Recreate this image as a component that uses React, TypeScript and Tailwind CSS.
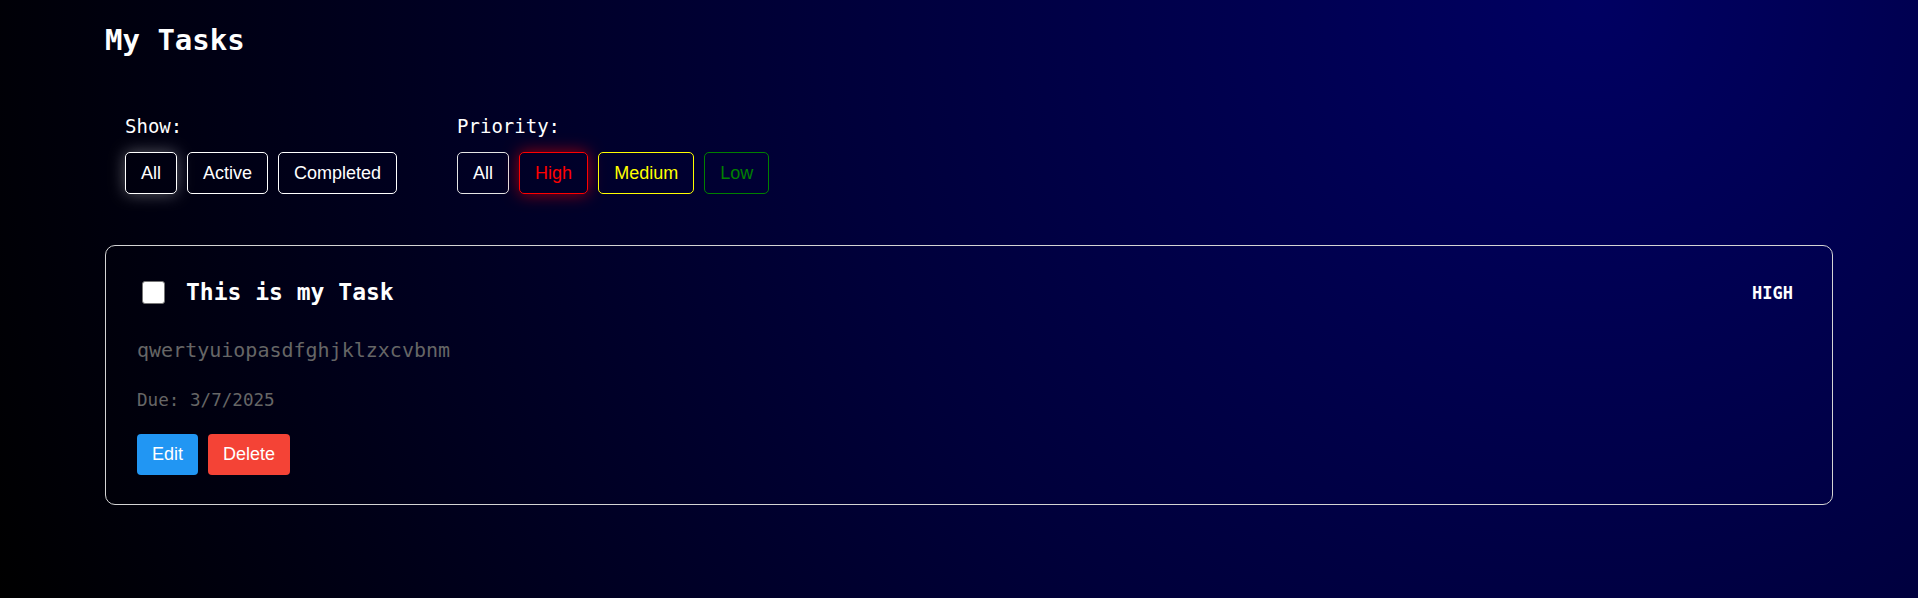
import React from "react";

const mono = "font-['DejaVu_Sans_Mono','Liberation_Mono',monospace]";
const sans = "font-['Liberation_Sans',Arial,sans-serif]";

export default function App() {
  return (
    <div className="min-h-screen w-full bg-black bg-[radial-gradient(circle_at_83%_0%,#000062_0%,#00003a_45%,#000000_100%)]">
      <div className="pl-[105px] pr-[85px] pt-[23px] pb-10">
        <h1 className={`${mono} text-[29px] leading-[34px] font-bold text-white`}>My Tasks</h1>

        <div className="mt-[38px] px-[20px] py-[20px] flex gap-[60px]">
          <div className="flex flex-col">
            <span className={`${mono} text-[19px] leading-[22px] text-white`}>Show:</span>
            <div className="mt-[15px] flex gap-[10px]">
              <button className={`${sans} text-[18px] leading-[20px] py-[10px] px-[15px] border border-white rounded-[5px] text-white shadow-[0_0_16px_rgba(255,255,255,0.35)]`}>All</button>
              <button className={`${sans} text-[18px] leading-[20px] py-[10px] px-[15px] border border-white rounded-[5px] text-white`}>Active</button>
              <button className={`${sans} text-[18px] leading-[20px] py-[10px] px-[15px] border border-white rounded-[5px] text-white`}>Completed</button>
            </div>
          </div>
          <div className="flex flex-col">
            <span className={`${mono} text-[19px] leading-[22px] text-white`}>Priority:</span>
            <div className="mt-[15px] flex gap-[10px]">
              <button className={`${sans} text-[18px] leading-[20px] py-[10px] px-[15px] border border-[#e5e5e5] rounded-[5px] text-white`}>All</button>
              <button className={`${sans} text-[18px] leading-[20px] py-[10px] px-[15px] border border-[#ff0000] rounded-[5px] text-[#ff0000] shadow-[0_0_16px_rgba(255,0,0,0.6)]`}>High</button>
              <button className={`${sans} text-[18px] leading-[20px] py-[10px] px-[15px] border border-[#ffff00] rounded-[5px] text-[#ffff00]`}>Medium</button>
              <button className={`${sans} text-[18px] leading-[20px] py-[10px] px-[15px] border border-[#008000] rounded-[5px] text-[#008000]`}>Low</button>
            </div>
          </div>
        </div>

        <div className="mt-[31px] border border-[#d4d4d4] rounded-[10px] px-[31px] pt-[32px] pb-[29px]">
          <div className="flex items-center justify-between">
            <div className="flex items-center">
              <input
                type="checkbox"
                className="appearance-none ml-[5px] w-[23px] h-[23px] bg-white border border-[#767676] rounded-[3px]"
              />
              <h3 className={`${mono} ml-[21px] text-[23px] leading-[29px] font-bold text-white`}>This is my Task</h3>
            </div>
            <span className={`${mono} px-2 text-[17px] leading-[20px] font-bold text-white`}>HIGH</span>
          </div>
          <p className={`${mono} mt-[31px] text-[20px] leading-[24px] text-[#666666]`}>qwertyuiopasdfghjklzxcvbnm</p>
          <p className={`${mono} mt-[27px] text-[17.6px] leading-[22px] text-[#666666]`}>Due: 3/7/2025</p>
          <div className="mt-[23px] flex gap-[10px]">
            <button className={`${sans} text-[18px] leading-[21px] py-[10px] px-[15px] rounded-[4px] bg-[#2196f3] text-white`}>Edit</button>
            <button className={`${sans} text-[18px] leading-[21px] py-[10px] px-[15px] rounded-[4px] bg-[#f44336] text-white`}>Delete</button>
          </div>
        </div>
      </div>
    </div>
  );
}
